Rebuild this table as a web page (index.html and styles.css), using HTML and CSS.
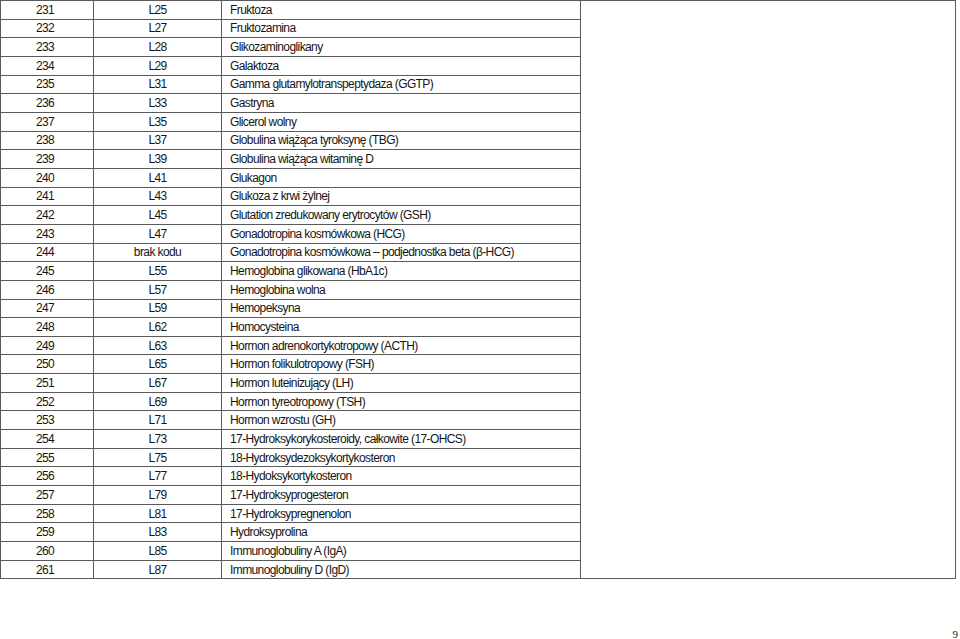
FILE: index.html
```html
<!DOCTYPE html>
<html lang="pl">
<head>
<meta charset="utf-8">
<title>Tabela</title>
<link rel="stylesheet" href="styles.css">
</head>
<body>
<table class="list">
<colgroup><col class="c1"><col class="c2"><col class="c3"><col class="c4"></colgroup>
<tbody>
<tr><td class="num">231</td><td class="code">L25</td><td class="name">Fruktoza</td><td class="blank" rowspan="31"></td></tr>
<tr><td class="num">232</td><td class="code">L27</td><td class="name">Fruktozamina</td></tr>
<tr><td class="num">233</td><td class="code">L28</td><td class="name">Glikozaminoglikany</td></tr>
<tr><td class="num">234</td><td class="code">L29</td><td class="name">Galaktoza</td></tr>
<tr><td class="num">235</td><td class="code">L31</td><td class="name">Gamma glutamylotranspeptydaza (GGTP)</td></tr>
<tr><td class="num">236</td><td class="code">L33</td><td class="name">Gastryna</td></tr>
<tr><td class="num">237</td><td class="code">L35</td><td class="name">Glicerol wolny</td></tr>
<tr><td class="num">238</td><td class="code">L37</td><td class="name">Globulina wiążąca tyroksynę (TBG)</td></tr>
<tr><td class="num">239</td><td class="code">L39</td><td class="name">Globulina wiążąca witaminę D</td></tr>
<tr><td class="num">240</td><td class="code">L41</td><td class="name">Glukagon</td></tr>
<tr><td class="num">241</td><td class="code">L43</td><td class="name">Glukoza z krwi żylnej</td></tr>
<tr><td class="num">242</td><td class="code">L45</td><td class="name">Glutation zredukowany erytrocytów (GSH)</td></tr>
<tr><td class="num">243</td><td class="code">L47</td><td class="name">Gonadotropina kosmówkowa (HCG)</td></tr>
<tr><td class="num">244</td><td class="code">brak kodu</td><td class="name">Gonadotropina kosmówkowa – podjednostka beta (β-HCG)</td></tr>
<tr><td class="num">245</td><td class="code">L55</td><td class="name">Hemoglobina glikowana (HbA1c)</td></tr>
<tr><td class="num">246</td><td class="code">L57</td><td class="name">Hemoglobina wolna</td></tr>
<tr><td class="num">247</td><td class="code">L59</td><td class="name">Hemopeksyna</td></tr>
<tr><td class="num">248</td><td class="code">L62</td><td class="name">Homocysteina</td></tr>
<tr><td class="num">249</td><td class="code">L63</td><td class="name">Hormon adrenokortykotropowy (ACTH)</td></tr>
<tr><td class="num">250</td><td class="code">L65</td><td class="name">Hormon folikulotropowy (FSH)</td></tr>
<tr><td class="num">251</td><td class="code">L67</td><td class="name">Hormon luteinizujący (LH)</td></tr>
<tr><td class="num">252</td><td class="code">L69</td><td class="name">Hormon tyreotropowy (TSH)</td></tr>
<tr><td class="num">253</td><td class="code">L71</td><td class="name">Hormon wzrostu (GH)</td></tr>
<tr><td class="num">254</td><td class="code">L73</td><td class="name">17-Hydroksykorykosteroidy, całkowite (17-OHCS)</td></tr>
<tr><td class="num">255</td><td class="code">L75</td><td class="name">18-Hydroksydezoksykortykosteron</td></tr>
<tr><td class="num">256</td><td class="code">L77</td><td class="name">18-Hydoksykortykosteron</td></tr>
<tr><td class="num">257</td><td class="code">L79</td><td class="name">17-Hydroksyprogesteron</td></tr>
<tr><td class="num">258</td><td class="code">L81</td><td class="name">17-Hydroksypregnenolon</td></tr>
<tr><td class="num">259</td><td class="code">L83</td><td class="name">Hydroksyprolina</td></tr>
<tr><td class="num">260</td><td class="code">L85</td><td class="name">Immunoglobuliny A (IgA)</td></tr>
<tr><td class="num">261</td><td class="code">L87</td><td class="name">Immunoglobuliny D (IgD)</td></tr>
</tbody>
</table>
<footer class="pagefoot"><span class="pagenum">9</span></footer>
</body>
</html>
```
FILE: styles.css
```css
html, body {
  margin: 0;
  padding: 0;
  background: #fff;
}
body {
  width: 960px;
  height: 639px;
  overflow: hidden;
  font-family: "Liberation Sans", Arial, sans-serif;
  color: #151515;
}
.list {
  border-collapse: collapse;
  table-layout: fixed;
  width: 955px;
  font-size: 12px;
  letter-spacing: -0.6px;
}
.c1 { width: 93px; }
.c2 { width: 128px; }
.c3 { width: 359px; }
.c4 { width: 375px; }
.list td {
  border: 1px solid #5a5a5a;
  height: 17.67px;
  padding: 0;
  line-height: 14px;
  white-space: nowrap;
  vertical-align: middle;
}
.list .num { text-align: center; padding-right: 4px; }
.list .code { text-align: center; }
.list .name { padding-left: 8px; }
.pagefoot {
  display: flex;
  justify-content: flex-end;
  padding: 49px 2px 0 0;
}
.pagenum {
  font-family: "Liberation Serif", "Times New Roman", serif;
  font-size: 11px;
  color: #222;
}
```
